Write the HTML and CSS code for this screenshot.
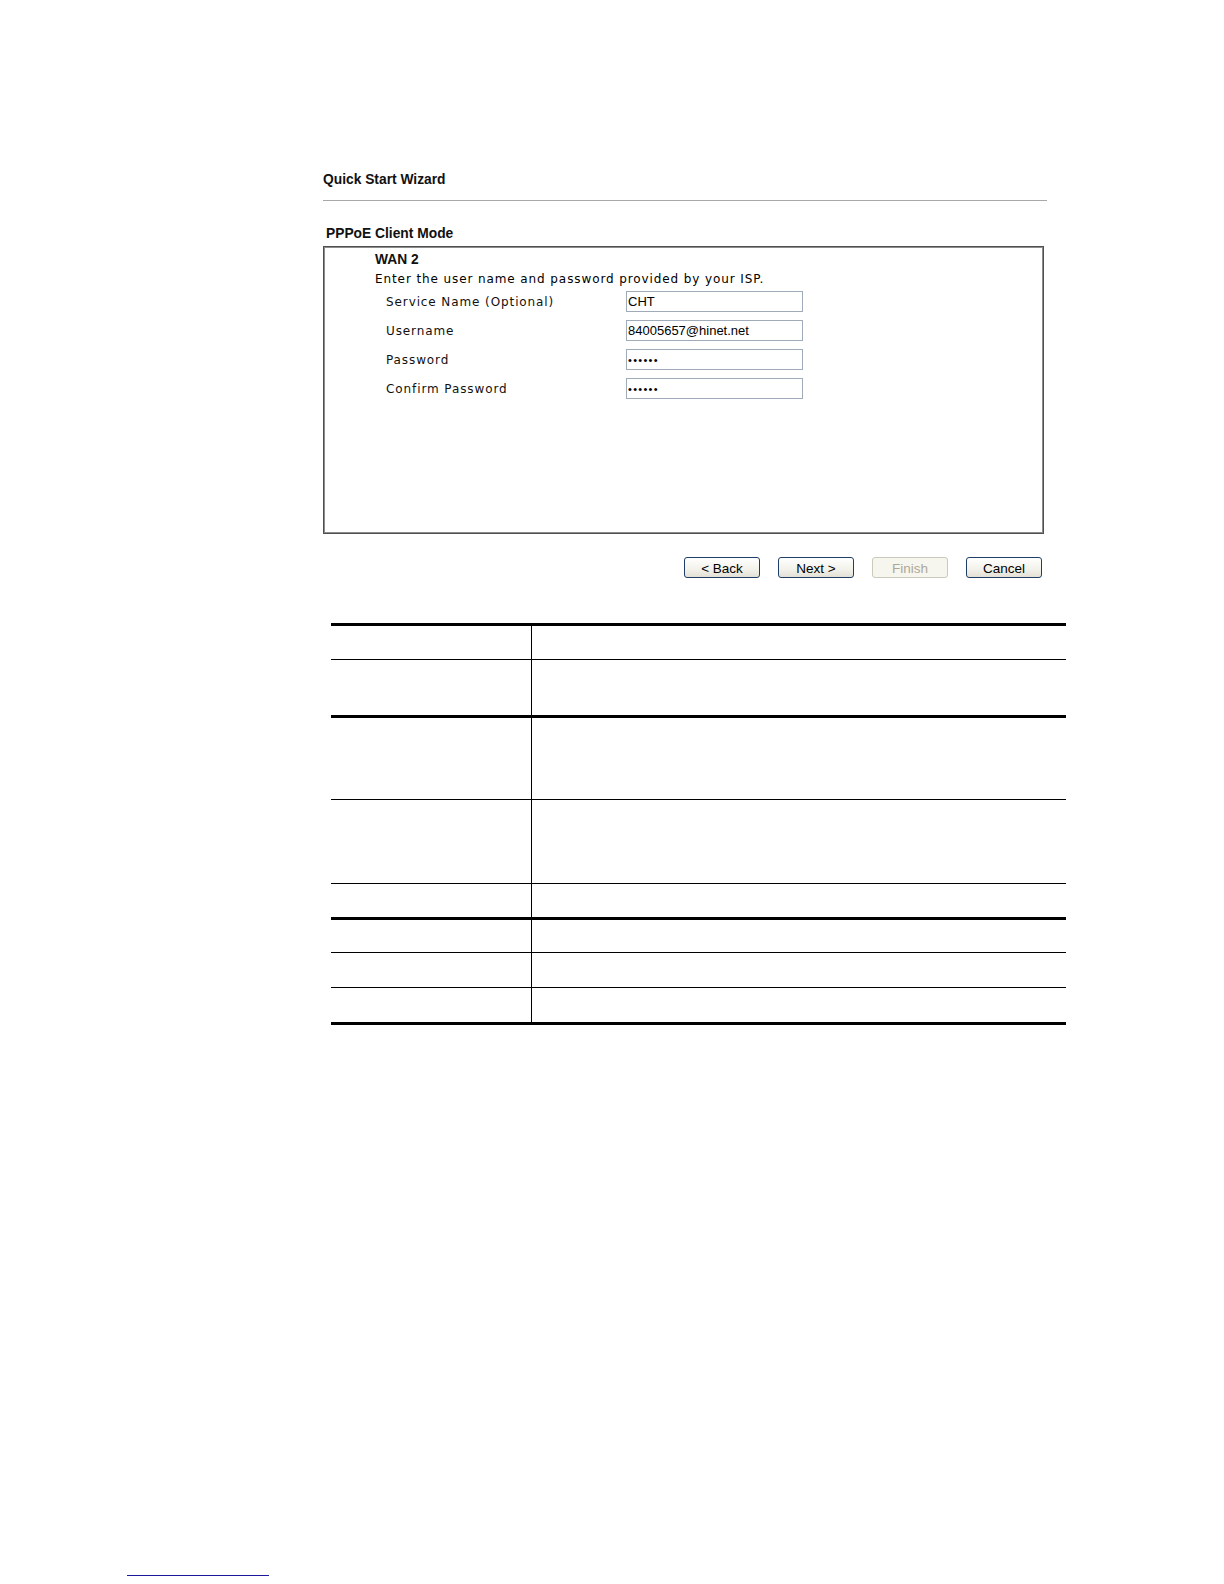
FILE: index.html
```html
<!DOCTYPE html>
<html>
<head>
<meta charset="utf-8">
<link rel="stylesheet" href="styles.css">
</head>
<body>
<main class="content">
  <div class="page-title">Quick Start Wizard</div>
  <div class="title-rule"></div>
  <div class="section-title">PPPoE Client Mode</div>
  <div class="panel">
    <div class="wan-title">WAN 2</div>
    <div class="intro">Enter the user name and password provided by your ISP.</div>
    <div class="form-grid">
      <label class="field-label">Service Name (Optional)</label>
      <input class="field-input" type="text" value="CHT">
      <label class="field-label">Username</label>
      <input class="field-input" type="text" value="84005657@hinet.net">
      <label class="field-label">Password</label>
      <input class="field-input dots" type="text" value="••••••">
      <label class="field-label">Confirm Password</label>
      <input class="field-input dots" type="text" value="••••••">
    </div>
  </div>
  <div class="button-row">
    <button class="btn">&lt; Back</button>
    <button class="btn">Next &gt;</button>
    <button class="btn disabled" disabled>Finish</button>
    <button class="btn">Cancel</button>
  </div>
  <div class="spec">
    <div class="spec-row h33"><div class="spec-key"></div><div class="spec-val"></div></div>
    <div class="spec-row h55 thin"><div class="spec-key"></div><div class="spec-val"></div></div>
    <div class="spec-row h81 thick"><div class="spec-key"></div><div class="spec-val"></div></div>
    <div class="spec-row h83 thin"><div class="spec-key"></div><div class="spec-val"></div></div>
    <div class="spec-row h33 thin"><div class="spec-key"></div><div class="spec-val"></div></div>
    <div class="spec-row h32 thick"><div class="spec-key"></div><div class="spec-val"></div></div>
    <div class="spec-row h34 thin"><div class="spec-key"></div><div class="spec-val"></div></div>
    <div class="spec-row h34 thin"><div class="spec-key"></div><div class="spec-val"></div></div>
  </div>
</main>
<footer class="footnote-rule"></footer>
</body>
</html>
```

FILE: styles.css
```css
html, body {
  margin: 0;
  padding: 0;
  background: #ffffff;
}

body {
  font-family: "DejaVu Sans", Verdana, sans-serif;
  color: #000;
}

.content {
  padding-top: 172px;
  margin-left: 323px;
  width: 745px;
}

.page-title,
.section-title,
.wan-title {
  font-family: "Liberation Sans", Arial, sans-serif;
  font-weight: bold;
  font-size: 13.8px;
  line-height: 16px;
  color: #111;
}

.title-rule {
  margin-top: 12px;
  width: 724px;
  height: 0;
  border-top: 1px solid #a8a8a8;
}

.section-title {
  margin-top: 25px;
  padding-left: 3px;
}

.panel {
  box-sizing: border-box;
  margin-top: 4px;
  width: 721px;
  height: 288px;
  border: 1px solid #4f4f4f;
  box-shadow: inset 0 0 0 1px #8c8c8c;
  padding: 5px 0 0 51px;
}

.intro {
  margin-top: 3px;
  font-size: 12px;
  line-height: 16px;
  letter-spacing: 0.9px;
}

.form-grid {
  margin-top: 4px;
  padding-left: 11px;
  display: grid;
  grid-template-columns: 240px 177px;
  grid-auto-rows: 21px;
  row-gap: 8px;
  align-items: center;
}

.field-label {
  padding-top: 2px;
  font-size: 12px;
  line-height: 19px;
  letter-spacing: 0.9px;
  color: #111;
}

.field-input {
  box-sizing: border-box;
  width: 177px;
  height: 21px;
  margin: 0;
  padding: 0 1px;
  border: 1px solid #9fabb8;
  font-family: "Liberation Sans", Arial, sans-serif;
  font-size: 13px;
  color: #000;
  background: #fff;
  outline: none;
}

.field-input.dots {
  font-size: 11px;
  letter-spacing: 1.3px;
}

.button-row {
  width: 721px;
  margin-top: 23px;
  display: flex;
  justify-content: flex-end;
  gap: 18px;
  padding-right: 2px;
  box-sizing: border-box;
}

.btn {
  box-sizing: border-box;
  width: 76px;
  height: 21px;
  margin: 0;
  padding: 2px 0 0;
  border: 1px solid #1f3f66;
  border-radius: 3px;
  background: linear-gradient(#ffffff, #f2f1ea 60%, #e3e1d6);
  font-family: "Liberation Sans", Arial, sans-serif;
  font-size: 13.5px;
  line-height: 16px;
  color: #000;
}

.btn.disabled {
  border-color: #cbc9bd;
  background: #f6f5ee;
  color: #aca899;
}

.spec {
  margin-top: 45px;
  margin-left: 8px;
  width: 735px;
  border-top: 3px solid #000;
  border-bottom: 3px solid #000;
}

.spec-row {
  display: grid;
  grid-template-columns: 201px 1fr;
}

.spec-row.thin {
  border-top: 1px solid #000;
}

.spec-row.thick {
  border-top: 3px solid #000;
}

.spec-key {
  border-right: 1px solid #000;
}

.h32 { height: 32px; }
.h33 { height: 33px; }
.h34 { height: 34px; }
.h55 { height: 55px; }
.h81 { height: 81px; }
.h83 { height: 83px; }

.footnote-rule {
  margin-top: 550px;
  margin-left: 127px;
  width: 142px;
  height: 0;
  border-top: 1px solid #1a1a9a;
}
```
